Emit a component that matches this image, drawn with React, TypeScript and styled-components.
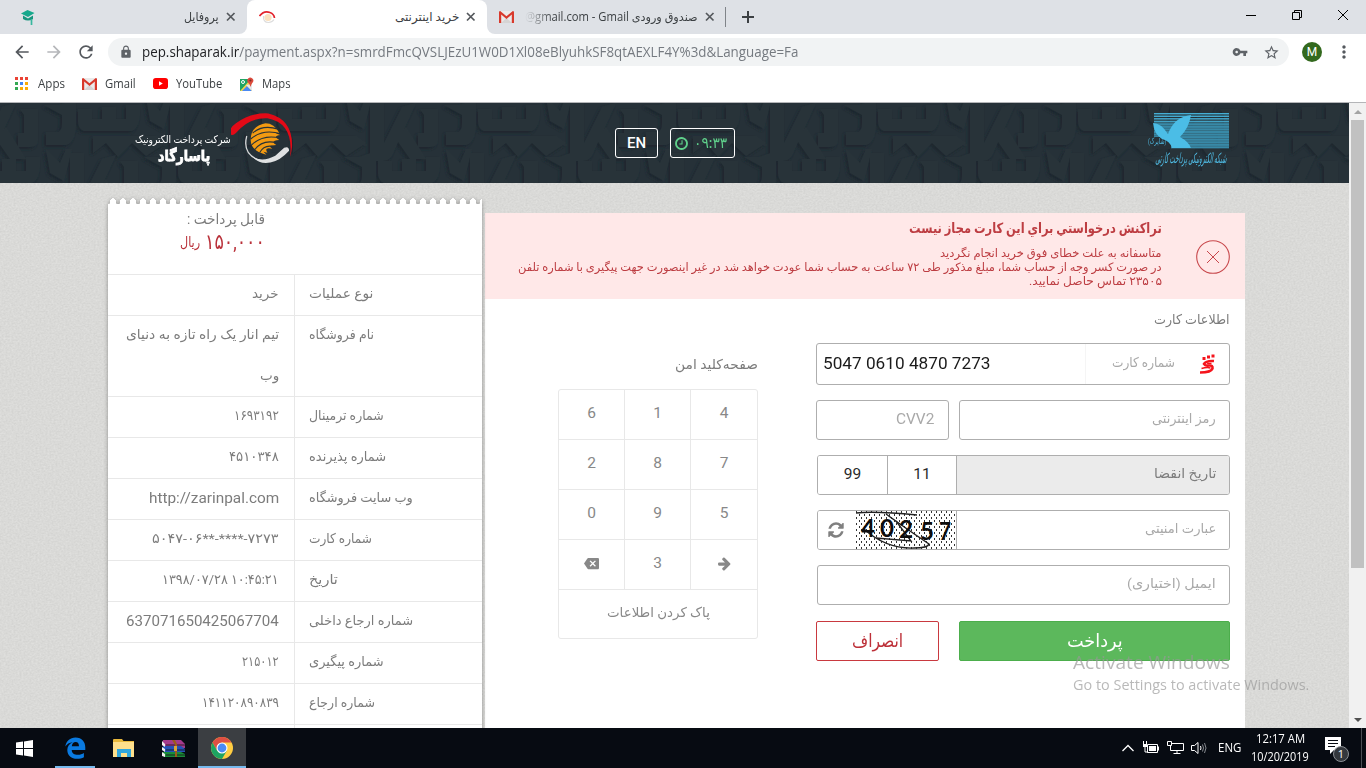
import React, { useLayoutEffect, useRef, useState } from 'react';
import styled, { createGlobalStyle, css } from 'styled-components';
import { MdArrowBack, MdArrowForward, MdRefresh, MdLock, MdVpnKey, MdStarBorder, MdMoreVert, MdBackspace } from 'react-icons/md';

const ui = `'Open Sans', 'Noto Sans', 'DejaVu Sans', sans-serif`;
const web = `Roboto, 'DejaVu Sans', sans-serif`;

const Global = createGlobalStyle`
  * { box-sizing: border-box; }
  body { margin: 0; background: #fff; overflow: hidden; }
`;

/* ---------- text fitted to a fixed measure ---------- */

const FitBox = styled.span<{ $w: number }>`
  display: inline-block;
  flex: none;
  width: ${p => p.$w}px;
  direction: ltr;
  text-align: left;
  line-height: 1.2;
`;
const FitInner = styled.span<{ $rtl: boolean; $force: boolean }>`
  display: inline-block;
  white-space: nowrap;
  transform-origin: 0 50%;
  direction: ${p => (p.$rtl ? 'rtl' : 'ltr')};
  ${p => p.$force && css`unicode-bidi: bidi-override;`}
`;

function Fit({ w, children, ltr = false, force = false }: { w: number; children: React.ReactNode; ltr?: boolean; force?: boolean }) {
  const ref = useRef<HTMLSpanElement>(null);
  const [scale, setScale] = useState(1);
  useLayoutEffect(() => {
    if (ref.current) setScale(w / ref.current.offsetWidth);
  }, [w]);
  return (
    <FitBox $w={w}>
      <FitInner ref={ref} $rtl={!ltr} $force={force} style={{ transform: `scaleX(${scale})` }}>{children}</FitInner>
    </FitBox>
  );
}

/* ---------- browser chrome ---------- */

const Screen = styled.div`
  position: relative;
  width: 1366px;
  height: 768px;
  display: flex;
  flex-direction: column;
  overflow: hidden;
  font-family: ${ui};
`;
const TabStrip = styled.div`
  height: 34px;
  flex: none;
  display: flex;
  background: #fff;
`;
const Tab = styled.div<{ $w: number; $active?: boolean; $left: number; $right: number; $round?: string }>`
  width: ${p => p.$w}px;
  height: 34px;
  display: flex;
  align-items: center;
  padding: 0 ${p => p.$right}px 0 ${p => p.$left}px;
  background: ${p => (p.$active ? '#fff' : '#dee1e6')};
  border-radius: ${p => p.$round || '0'};
  font-size: 12px;
  color: #3c4043;
  svg { flex: none; }
`;
const ActiveBack = styled.div`
  background: #dee1e6;
  flex: none;
`;
const StripRest = styled.div`
  flex: 1;
  background: #dee1e6;
  display: flex;
  align-items: center;
  svg { flex: none; }
`;
const Spacer = styled.div`
  flex: 1;
`;
const CloseSvg = styled.svg`
  margin-left: 7px;
  margin-right: 2px;
`;
const CloseX = () => (
  <CloseSvg width="10" height="10" viewBox="0 0 10 10">
    <path d="M1 1l7.500 7.500M8.500 1L1 8.500" stroke="#54585c" strokeWidth="1.700" />
  </CloseSvg>
);
const Faded = styled.span`
  display: flex;
  mask-image: linear-gradient(90deg, transparent 0, #000 28px);
`;
const TabDivider = styled.div`
  width: 1px;
  height: 20px;
  background: #808489;
`;
const WindowButtons = styled.div`
  display: flex;
  gap: 36px;
  align-items: center;
  padding: 0 18px 5px 0;
`;
const Toolbar = styled.div`
  height: 36px;
  flex: none;
  display: flex;
  align-items: center;
  padding-left: 12px;
  background: #fff;
  color: #55595e;
`;
const NavIcons = styled.div`
  display: flex;
  gap: 12px;
  width: 96px;
  svg { width: 20px; height: 20px; }
  svg:nth-child(2) { color: #b5b7ba; }
`;
const Omnibox = styled.div`
  width: 1181px;
  height: 28px;
  border-radius: 14px;
  background: #f1f3f4;
  display: flex;
  align-items: center;
  padding: 0 9px 0 11px;
  font-size: 14px;
  > svg { width: 14px; height: 14px; color: #5f6368; }
  > svg + span { margin-left: 9px; }
`;
const Host = styled.span`
  color: #202124;
`;
const UrlText = styled.span`
  color: #757a80;
`;
const OmniIcons = styled.div`
  display: flex;
  align-items: center;
  gap: 15px;
  color: #5f6368;
`;
const Avatar = styled.div`
  width: 20px;
  height: 20px;
  margin: 0 12px 0 13px;
  border-radius: 50%;
  background: #33691e;
  color: #fff;
  font: 12px/20px Roboto, sans-serif;
  text-align: center;
`;
const Bookmarks = styled.div`
  height: 33px;
  flex: none;
  display: flex;
  align-items: center;
  padding: 0 0 4px 15px;
  border-bottom: 1px solid #b4b5b8;
  background: #fff;
  font-size: 12px;
  color: #3c4043;
`;
const Bookmark = styled.div<{ $gap: number; $after: number }>`
  display: flex;
  align-items: center;
  gap: ${p => p.$gap}px;
  margin-right: ${p => p.$after}px;
`;

const GmailIcon = () => (
  <svg width="15" height="12" viewBox="0 0 15 12">
    <rect x="1" width="13" height="12" fill="#eceaea" />
    <path d="M2 12 7.500 7 13 12z" fill="#d6d4d4" />
    <path d="M0 12V1.200Q0 0 1.200 0L7.500 5.300 13.800 0Q15 0 15 1.200V12H12.800V3.600L7.500 8 2.200 3.600V12z" fill="#d8392c" />
  </svg>
);
const CapIcon = () => (
  <svg width="16" height="17" viewBox="0 0 16 17">
    <path d="M1 4.500 7.500 1 14.500 4 8 8z" fill="#16a88c" />
    <path d="M3 6.500 8 9.500 13 6.500V10Q8 13 3 10z" fill="#17957d" />
    <path d="M11.500 10v6" stroke="#39b89f" strokeWidth="1.700" />
  </svg>
);
const EyeIcon = () => (
  <svg width="17" height="15" viewBox="0 0 17 15">
    <path d="M.5 6Q5 0 11 2.500 15 4 15.500 8" fill="none" stroke="#e3242c" strokeWidth="1.700" />
    <circle cx="9" cy="7.500" r="3.600" fill="#fae0bd" />
    <path d="M4.500 6Q4 12.500 9.500 12.500q3.500 0 5.500-3" fill="none" stroke="#dcdcdc" strokeWidth="1.200" />
  </svg>
);
const AppsIcon = () => (
  <svg width="13" height="13" viewBox="0 0 13 13">
    {['#ea4335', '#ea4335', '#ea4335', '#34a853', '#4285f4', '#fbab05', '#34a853', '#fbab05', '#fbab05'].map((c, i) => (
      <rect key={i} x={(i % 3) * 5} y={Math.floor(i / 3) * 5} width="3" height="3" fill={c} />
    ))}
  </svg>
);
const YouTubeIcon = () => (
  <svg width="15" height="11" viewBox="0 0 15 11">
    <rect width="15" height="11" rx="2.800" fill="#f00" />
    <path d="M6 3.200 9.800 5.500 6 7.800z" fill="#fff" />
  </svg>
);
const MapsIcon = () => (
  <svg width="15" height="15" viewBox="0 0 15 15">
    <path d="M1 2h12v12H1z" fill="#1fa463" />
    <path d="M1 14 11 3l2 2v9z" fill="#f6d34a" />
    <path d="M3 14l5-5 5 5z" fill="#4a89f3" />
    <path d="M7 8l6 6V7z" fill="#e4e7e9" />
    <circle cx="4" cy="5" r="1.500" fill="none" stroke="#fff" />
    <path d="M11.500 10Q11 7 9 5.500A3 3 0 1 1 14 5q-2 2-2.500 5z" fill="#dc4a3d" />
    <circle cx="11.400" cy="3.500" r="1.100" fill="#7d2a22" />
  </svg>
);

/* ---------- page ---------- */

const Viewport = styled.div`
  height: 625px;
  flex: none;
  display: flex;
`;
const Page = styled.div`
  position: relative;
  width: 1349px;
  height: 625px;
  overflow: hidden;
  display: flex;
  flex-direction: column;
  background: #dadad8;
  font-family: ${web};
  color: #7c7c7c;
  isolation: isolate;
`;
const Backdrop = styled.svg`
  position: absolute;
  inset: 0;
  z-index: -1;
`;
const Banner = styled.header`
  position: relative;
  height: 80px;
  flex: none;
  display: flex;
  align-items: flex-start;
  padding-left: 134px;
  background: #263138;
  isolation: isolate;
`;
const HeadTools = styled.div`
  display: flex;
  gap: 12px;
  margin: 25px 0 0 321px;
`;
const HeadButton = styled.div<{ $w: number; $c: string }>`
  width: ${p => p.$w}px;
  height: 30px;
  border: 1px solid #fff;
  border-radius: 3px;
  display: flex;
  align-items: center;
  justify-content: center;
  gap: 5px;
  padding-right: ${p => (p.$w > 50 ? 4 : 0)}px;
  color: ${p => p.$c};
  font-size: 15px;
  font-weight: 500;
`;
const Brand = styled.div`
  display: flex;
  padding-top: 6px;
  width: 160px;
  color: #fff;
`;
const BrandText = styled.div`
  width: 97px;
  flex: none;
  display: flex;
  flex-direction: column;
  align-items: center;
  padding-top: 25px;
  font-size: 10.500px;
`;
const BrandName = styled.div`
  font-size: 15px;
  font-weight: 700;
  margin: 0 0 0 3px;
  -webkit-text-stroke: 0.8px #fff;
`;
const Shaparak = styled.div`
  width: 86px;
  margin: 8px 0 0 411px;
  display: flex;
  flex-direction: column;
  color: #50bde6;
`;
const ShaparakArt = styled.div`
  position: relative;
  height: 39px;
`;
const ShaparakTag = styled.div`
  position: absolute;
  left: 2px;
  top: 26px;
  font-size: 8px;
`;
const ShaparakName = styled.div`
  padding-left: 10px;
  font-size: 14px;
  transform: skewX(-10deg);
`;
const Columns = styled.div`
  display: flex;
  align-items: flex-start;
  padding-left: 108px;
`;
const Receipt = styled.aside`
  width: 374px;
  margin: 15px 3px 0 0;
  filter: drop-shadow(0 1px 2px rgba(0, 0, 0, 0.35));
`;
const Scallops = styled.div`
  height: 6px;
  background: radial-gradient(ellipse 3.600px 6px at 5px 6px, #fff 92%, transparent) 0 0 / 10px 6px;
`;
const ReceiptBody = styled.div`
  height: 530px;
  background: #fff;
  overflow: hidden;
`;
const Payable = styled.div`
  height: 70px;
  padding: 7px 217px 0 0;
  display: flex;
  flex-direction: column;
  align-items: flex-end;
  font-size: 14px;
`;
const Amount = styled.div`
  display: flex;
  align-items: center;
  gap: 5px;
  margin-top: 2px;
  color: #b9313a;
  font-size: 21px;
`;
const Currency = styled.span`
  font-size: 14px;
`;
const Row = styled.div<{ $lines?: number }>`
  height: ${p => (p.$lines === 2 ? 81 : 41)}px;
  display: flex;
  border-top: 1px solid #e8e8e8;
  font-size: 13.500px;
`;
const Value = styled.div`
  width: 187px;
  padding-right: 15px;
  border-right: 1px solid #e8e8e8;
`;
const Line = styled.div`
  height: 40px;
  display: flex;
  align-items: center;
  justify-content: flex-end;
  padding-bottom: 3px;
  & + & { height: 42px; }
`;
const Label = styled.div`
  height: 40px;
  padding: 0 0 3px 14px;
  display: flex;
  align-items: center;
`;
const Latin = styled.span`
  font-size: 15px;
`;
const Checkout = styled.main`
  width: 760px;
  height: 515px;
  margin-top: 30px;
  background: #fff;
`;
const Alert = styled.div`
  height: 86px;
  display: flex;
  justify-content: flex-end;
  padding: 7px 15px 0 0;
  background: #ffe8e8;
  color: #bd3d42;
  font-size: 11.500px;
`;
const AlertText = styled.div`
  display: flex;
  flex-direction: column;
  align-items: flex-end;
  margin-right: 34px;
`;
const AlertLine = styled.div`
  height: 14px;
  display: flex;
  align-items: center;
`;
const AlertTitle = styled.div`
  height: 17px;
  margin-bottom: 10px;
  font-size: 14px;
  font-weight: 700;
  display: flex;
  align-items: center;
`;
const AlertIcon = styled.svg`
  margin-top: 20px;
`;
const Panels = styled.div`
  display: flex;
  padding-left: 73px;
`;
const KeySide = styled.section`
  width: 200px;
  margin: 56px 58px 0 0;
`;
const SectionTitle = styled.div`
  display: flex;
  justify-content: flex-end;
  align-items: center;
  height: 20px;
  padding-bottom: 1px;
  font-size: 13.500px;
`;
const Keypad = styled.div`
  margin-top: 14px;
  width: 200px;
  height: 250px;
  display: grid;
  grid-template-columns: 66px 66px 66px;
  grid-template-rows: repeat(4, 49px) 48px;
  gap: 1px 0;
  background: #e8e8e8;
  border: 1px solid #e8e8e8;
  border-radius: 3px;
  overflow: hidden;
`;
const Key = styled.div<{ $wide?: boolean }>`
  background: #fff;
  border-right: 1px solid #e8e8e8;
  display: flex;
  align-items: center;
  justify-content: center;
  padding-bottom: 3px;
  font-size: 15.500px;
  color: #888;
  &:nth-child(3n) { border-right: 0; }
  ${p => p.$wide && css`grid-column: 1 / -1; border-right: 0; font-size: 13.500px;`}
`;
const Form = styled.section`
  width: 414px;
  padding-top: 11px;
`;
const Fields = styled.div`
  display: flex;
  flex-direction: column;
  gap: 15px;
  margin-top: 13px;
`;
const Pair = styled.div`
  display: flex;
  justify-content: space-between;
`;
const Field = styled.div<{ $w?: number; $h?: number }>`
  width: ${p => p.$w || 414}px;
  height: ${p => p.$h || 40}px;
  align-self: flex-end;
  border: 1px solid #aeaeae;
  border-radius: 3px;
  background: #fff;
  display: flex;
  align-items: center;
  justify-content: flex-end;
  padding: 0 13px 3px 6px;
  font-size: 13.500px;
  color: #a9a9a9;
`;
const CardField = styled(Field)`
  padding: 0;
`;
const CardNumber = styled.div`
  width: 269px;
  height: 100%;
  padding: 0 0 2px 6px;
  display: flex;
  align-items: center;
  border-right: 1px solid #f5f5f5;
  font-size: 17px;
  color: #1a1a1a;
`;
const CardHint = styled.div`
  flex: 1;
  display: flex;
  align-items: center;
  justify-content: flex-end;
  gap: 24px;
  padding: 0 12px 4px 0;
  svg { position: relative; top: 2px; }
`;
const Joined = styled(Field)`
  padding: 0;
  overflow: hidden;
`;
const Cell = styled.div<{ $w: number; $gray?: boolean; $first?: boolean }>`
  width: ${p => p.$w}px;
  height: 38px;
  flex: none;
  display: flex;
  align-items: center;
  justify-content: ${p => (p.$gray ? 'flex-end' : 'center')};
  padding: 0 ${p => (p.$gray ? 13 : 0)}px 3px 0;
  border-left: ${p => (p.$first ? '0' : '1px solid #aeaeae')};
  background: ${p => (p.$gray ? '#ebebeb' : '#fff')};
  color: ${p => (p.$gray ? '#7d7d7d' : '#2a2a2a')};
  font-size: ${p => (p.$gray ? 13.5 : 15.5)}px;
`;
const Cvv = styled.span`
  font-size: 15px;
  margin-right: 1px;
`;
const Hint = styled.span`
  margin-right: 13px;
  font-size: 13.500px;
  color: #a9a9a9;
`;
const Reload = styled.span`
  display: flex;
  margin: 2px 0 0 -3px;
  color: #808080;
`;
const Submit = styled.div<{ $w: number; $solid?: boolean }>`
  width: ${p => p.$w}px;
  height: 40px;
  margin-top: 1px;
  display: flex;
  align-items: center;
  justify-content: center;
  border: 1px solid ${p => (p.$solid ? '#4cae4c' : '#c9393f')};
  border-radius: 2px;
  background: ${p => (p.$solid ? '#5cb85c' : '#fff')};
  color: ${p => (p.$solid ? '#fff' : '#bd3038')};
  font-size: 18px;
`;
const Scrollbar = styled.div`
  width: 17px;
  height: 625px;
  background: #f1f1f1;
  display: flex;
  flex-direction: column;
  align-items: center;
  padding: 6px 0 5px;
`;
const Thumb = styled.div`
  width: 13px;
  height: 448px;
  margin: 6px 0 auto;
  background: #c1c1c1;
`;

const Watermark = styled.div`
  position: absolute;
  left: 1073px;
  top: 649px;
  display: flex;
  flex-direction: column;
  color: rgba(152, 152, 152, 0.68);
`;
const MarkTitle = styled.div`
  font-size: 19px;
  height: 26px;
`;
const MarkText = styled.div`
  font-size: 14px;
`;

/* One run of the square kufi ornament, repeated in a half-drop. */
const ornament = (
  <>
    <path d="M64 2H80L96 -4V22Q95 40 86 42H66V29H78Q82 28 82 20V12z" />
    <path d="M98 6H112V16H122V4H136V16H146V2H160Q161 24 152 28H104Q98 26 98 18z" />
    <path d="M113 33H176L186 40L166 53 152 40 138 54 126 40 113 50z" />
    <path d="M190 -2H204V40L222 4 236 0 214 48Q211 58 202 58H190z" />
    <path d="M216 36 226 24 246 56H230z" />
    <path d="M166 -6 180 8 186 -6 192 -6 184 26 170 18z" />
    <path d="M240 6H258V36Q258 44 250 44H238V30H244V12z" />
  </>
);
const ornamentField = (
  <>
    {ornament}
    <g transform="translate(-200 0)">{ornament}</g>
    <g transform="translate(-100 52)">{ornament}</g>
    <g transform="translate(100 52)">{ornament}</g>
    <g transform="translate(-300 52)">{ornament}</g>
  </>
);

const BannerArt = () => (
  <Backdrop width="1349" height="80">
    <defs>
      <filter id="soft" x="-5%" y="-5%" width="110%" height="110%"><feGaussianBlur stdDeviation="1.500" /></filter>
      <pattern id="kufi" width="200" height="80" patternUnits="userSpaceOnUse" x="180">
        <g fill="#1b272d" transform="translate(-2 2)" filter="url(#soft)">{ornamentField}</g>
        <g fill="#283339">{ornamentField}</g>
      </pattern>
    </defs>
    <rect width="1349" height="80" fill="url(#kufi)" />
  </Backdrop>
);

const Linen = () => (
  <Backdrop width="1349" height="625">
    <filter id="linen" x="0" y="0" width="100%" height="100%" colorInterpolationFilters="sRGB">
      <feTurbulence type="fractalNoise" baseFrequency="0.5 0.6" numOctaves="2" seed="4" />
      <feColorMatrix values="0.080 0 0 0 0.813  0.080 0 0 0 0.813  0.080 0 0 0 0.805  0 0 0 0 1" />
    </filter>
    <rect width="1349" height="625" filter="url(#linen)" />
  </Backdrop>
);

const Emblem = () => (
  <svg width="64" height="57" viewBox="0 0 64 57">
    <path d="M-1 24Q-2 19 5 14 20 3 38 4 63 10 62 38 61 46 60 48 64 14 37 9 18 8 5 24 1 28 -1 24z" fill="#e20a17" />
    <path d="M16 27Q11 46 30 52" fill="none" stroke="#d8dadb" strokeWidth="1.300" />
    <path d="M22 48Q32 54 45 47L54 39Q59 37 59 42 50 52 40 54 28 56 22 48z" fill="#dfe1e2" />
    <path d="M49 24Q44 14 35 14 20 17 20 31 20 42 36 46L33 43 37 44Q33 38 42 40 36 36 46 36 39 32 49 31 42 27 50 26 42 23 49 24z" fill="#f39a12" />
    <path d="M22 24Q32 15 48 20M20 30Q33 19 51 25M21 36Q32 25 50 29M24 41Q32 30 47 34M29 44Q34 35 44 38" fill="none" stroke="#263138" strokeWidth="1.100" />
  </svg>
);

const ShaparakLogo = () => (
  <svg width="86" height="39" viewBox="0 0 86 39">
    {Array.from({ length: 14 }, (_, i) => (
      <rect key={i} x="8" y={2 + i * 2.57} width="75" height={i < 4 ? 1.4 : 2} fill={i < 4 ? '#45aed3' : '#347f9c'} />
    ))}
    <rect x="8" y="10" width="75" height="27" fill="#3d96b6" opacity="0.450" />
    <path d="M6 26H19L25 33V38H6z" fill="#263138" />
    <path d="M7 12Q15 12 22 23 28 6 45 4 43 17 34 26 43 31 45 37H26Q24 30 16 28 8 23 7 12z" fill="#4bbde6" />
  </svg>
);

const FaIcon = ({ d, size }: { d: string; size: number }) => (
  <svg width={size} height={size} viewBox="0 0 1792 1792" fill="currentColor"><path d={d} /></svg>
);
const clockPath = 'M1024 544v448q0 14-9 23t-23 9h-320q-14 0-23-9t-9-23v-64q0-14 9-23t23-9h224v-352q0-14 9-23t23-9h64q14 0 23 9t9 23zm416 352q0-148-73-273t-198-198-273-73-273 73-198 198-73 273 73 273 198 198 273 73 273-73 198-198 73-273zm224 0q0 209-103 385.500t-279.500 279.500-385.500 103-385.500-103-279.500-279.500-103-385.500 103-385.500 279.500-279.500 385.500-103 385.500 103 279.500 279.500 103 385.500z';
const refreshPath = 'M1639 1056q0 5-1 7-64 268-268 434.500t-478 166.500q-146 0-282.500-55t-243.500-157l-129 129q-19 19-45 19t-45-19-19-45v-448q0-26 19-45t45-19h448q26 0 45 19t19 45-19 45l-137 137q71 66 161 102t187 36q134 0 250-65t186-179q11-17 53-117 8-23 30-23h192q13 0 22.500 9.500t9.500 22.500zm25-800v448q0 26-19 45t-45 19h-448q-26 0-45-19t-19-45 19-45l138-138q-148-137-349-137-134 0-250 65t-186 179q-11 17-53 117-8 23-30 23h-199q-13 0-22.500-9.500t-9.500-22.500v-7q65-268 270-434.500t480-166.500q146 0 284 55.500t245 156.500l130-129q19-19 45-19t45 19 19 45z';
const arrowPath = 'M1600 960q0 54-37 91l-651 651q-39 37-91 37-51 0-90-37l-75-75q-38-38-38-91t38-91l293-293h-704q-52 0-84.500-37.500t-32.500-90.500v-128q0-53 32.500-90.500t84.500-37.500h704l-293-294q-38-36-38-90t38-90l75-75q38-38 90-38 53 0 91 38l651 651q37 35 37 90z';

const ShetabIcon = () => (
  <svg width="18" height="22" viewBox="0 0 18 22" fill="none" stroke="#f5141c">
    <path d="M1 19.500Q12 19.500 13.500 15.500 14 12 10 12.500 6 13 5 11 7 7.500 15 8" strokeWidth="2.600" />
    <path d="M2.500 15.500Q8 14 11.500 15M8.500 9.500Q8 11 12.500 10.500" strokeWidth="1.500" />
    <path d="M3.500 5.500h3M8 4h3M12.500 3h3" strokeWidth="2.800" />
  </svg>
);

const Captcha = () => (
  <svg width="100" height="38" viewBox="0 0 100 38">
    <defs>
      <pattern id="dots" width="5" height="6" patternUnits="userSpaceOnUse">
        <path d="M0 0h1v2H0zM3 3h1v2H3z" fill="#333" />
      </pattern>
    </defs>
    <rect width="100" height="38" fill="#fff" />
    <rect width="100" height="38" fill="url(#dots)" />
    <g fill="none" stroke="#222">
      <path d="M0 2Q20 0 61 4M30 3Q45 14 73 33 72 37 58 37" strokeWidth="1.500" />
      <path d="M8 18 Q30 38 58 37M20 27 55 30 40 10" strokeWidth="1.300" />
    </g>
    <g fontFamily="Lato, sans-serif" fontWeight="700" fontSize="25" fill="#0d0d0d">
      <text x="5" y="26" textLength="14" lengthAdjust="spacingAndGlyphs">4</text>
      <text x="24" y="26" textLength="14" lengthAdjust="spacingAndGlyphs">0</text>
      <text x="43" y="27" textLength="14" lengthAdjust="spacingAndGlyphs">2</text>
      <text x="64" y="29" textLength="14" lengthAdjust="spacingAndGlyphs">5</text>
      <text x="83" y="29" textLength="12" lengthAdjust="spacingAndGlyphs">7</text>
    </g>
  </svg>
);

/* ---------- taskbar ---------- */

const Taskbar = styled.footer`
  height: 40px;
  flex: none;
  display: flex;
  background: #070b12;
  color: #fff;
`;
const TaskItem = styled.div<{ $w: number; $active?: boolean; $line?: number; $nudge?: number }>`
  width: ${p => p.$w}px;
  height: 40px;
  padding-right: ${p => p.$nudge || 0}px;
  display: flex;
  align-items: center;
  justify-content: center;
  background-color: ${p => (p.$active ? '#3b3e42' : 'transparent')};
  ${p => p.$line && css`
    background-image: linear-gradient(#76b9ed, #76b9ed);
    background-size: ${p.$line}px 2px;
    background-position: 50% 100%;
    background-repeat: no-repeat;
  `}
`;
const Tray = styled.div`
  margin-left: auto;
  display: flex;
  align-items: center;
  font-size: 12px;
`;
const TrayIcons = styled.div`
  display: flex;
  align-items: center;
  gap: 7px;
  svg + span { margin-left: 3px; }
`;
const Clock = styled.div`
  display: flex;
  flex-direction: column;
  align-items: center;
  gap: 4px;
  width: 60px;
  margin: 0 14px 0 9px;
`;
const TrayEdge = styled.div`
  width: 1px;
  height: 40px;
  margin: 0 4px 0 9px;
  background: #4a4e54;
`;

const details: { label: string; lw: number; value: string[]; vw: number[]; kind?: 'latin' | 'forced' }[] = [
  { label: 'نوع عملیات', lw: 64, value: ['خرید'], vw: [27] },
  { label: 'نام فروشگاه', lw: 65, value: ['تیم انار یک راه تازه به دنیای', 'وب'], vw: [153, 19] },
  { label: 'شماره ترمینال', lw: 75, value: ['۱۶۹۳۱۹۲'], vw: [45] },
  { label: 'شماره پذیرنده', lw: 77, value: ['۴۵۱۰۳۴۸'], vw: [50] },
  { label: 'وب سایت فروشگاه', lw: 104, value: ['http://zarinpal.com'], vw: [130], kind: 'latin' },
  { label: 'شماره کارت', lw: 63, value: ['۵۰۴۷-۰۶**-****-۷۲۷۳'], vw: [127], kind: 'forced' },
  { label: 'تاریخ', lw: 29, value: ['۱۳۹۸/۰۷/۲۸ ۱۰:۴۵:۲۱'], vw: [117], kind: 'forced' },
  { label: 'شماره ارجاع داخلی', lw: 104, value: ['637071650425067704'], vw: [153], kind: 'latin' },
  { label: 'شماره پیگیری', lw: 75, value: ['۲۱۵۰۱۲'], vw: [37] },
  { label: 'شماره ارجاع', lw: 66, value: ['۱۴۱۱۲۰۸۹۰۸۳۹'], vw: [77] },
];

export default function App() {
  return (
    <Screen>
      <Global />
      <TabStrip>
        <Tab $w={247} $left={20} $right={9} $round="0 0 8px 0">
          <CapIcon />
          <Spacer />
          <Fit w={35}>پروفایل</Fit>
          <CloseX />
        </Tab>
        <ActiveBack>
          <Tab $w={240} $left={12} $right={9} $active $round="8px 8px 0 0">
            <EyeIcon />
            <Spacer />
            <Fit w={64}>خرید اینترنتی</Fit>
            <CloseX />
          </Tab>
        </ActiveBack>
        <Tab $w={238} $left={12} $right={8} $round="0 0 0 8px">
          <GmailIcon />
          <Spacer />
          <Faded><Fit w={173}>صندوق ورودی <bdi>@gmail.com - Gmail</bdi></Fit></Faded>
          <CloseX />
        </Tab>
        <StripRest>
          <TabDivider />
          <svg width="44" height="14" viewBox="0 0 44 14"><path d="M16 7h12M22 1v12" stroke="#3c4043" strokeWidth="2" /></svg>
          <Spacer />
          <WindowButtons>
            <svg width="10" height="10"><path d="M0 5.500h10" stroke="#000" /></svg>
            <svg width="10" height="10" fill="none" stroke="#000"><path d="M.5 2.500h7v7h-7zM2.500 2.500v-2h7v7h-2" /></svg>
            <svg width="10" height="10"><path d="M0 0l10 10M10 0L0 10" stroke="#000" /></svg>
          </WindowButtons>
        </StripRest>
      </TabStrip>
      <Toolbar>
        <NavIcons><MdArrowBack /><MdArrowForward /><MdRefresh /></NavIcons>
        <Omnibox>
          <MdLock />
          <Fit w={656} ltr><Host>pep.shaparak.ir</Host><UrlText>/payment.aspx?n=smrdFmcQVSLJEzU1W0D1Xl08eBlyuhkSF8qtAEXLF4Y%3d&amp;Language=Fa</UrlText></Fit>
          <Spacer />
          <OmniIcons><MdVpnKey size={16} /><MdStarBorder size={17} /></OmniIcons>
        </Omnibox>
        <Avatar>M</Avatar>
        <MdMoreVert size={20} />
      </Toolbar>
      <Bookmarks>
        <Bookmark $gap={10} $after={17}><AppsIcon /><Fit w={27} ltr>Apps</Fit></Bookmark>
        <Bookmark $gap={8} $after={17}><GmailIcon /><Fit w={31} ltr>Gmail</Fit></Bookmark>
        <Bookmark $gap={8} $after={17}><YouTubeIcon /><Fit w={46} ltr>YouTube</Fit></Bookmark>
        <Bookmark $gap={8} $after={0}><MapsIcon /><Fit w={29} ltr>Maps</Fit></Bookmark>
      </Bookmarks>

      <Viewport>
        <Page>
          <Linen />
          <Banner>
            <BannerArt />
            <Brand>
              <BrandText>
                <Fit w={96}>شرکت پرداخت الکترونیک</Fit>
                <BrandName><Fit w={52}>پاسارگاد</Fit></BrandName>
              </BrandText>
              <Emblem />
            </Brand>
            <HeadTools>
              <HeadButton $w={43} $c="#fff"><Fit w={19} ltr>EN</Fit></HeadButton>
              <HeadButton $w={65} $c="#5fd08b"><FaIcon d={clockPath} size={15} /><Fit w={33} ltr force>۰۹:۳۳</Fit></HeadButton>
            </HeadTools>
            <Shaparak>
              <ShaparakArt>
                <ShaparakLogo />
                <ShaparakTag><Fit w={18}>(شاپرک)</Fit></ShaparakTag>
              </ShaparakArt>
              <ShaparakName><Fit w={71}>شبکه الکترونیکی پرداخت کارتی</Fit></ShaparakName>
            </Shaparak>
          </Banner>
          <Columns>
            <Receipt>
              <Scallops />
              <ReceiptBody>
                <Payable>
                  <Fit w={78}>قابل پرداخت :</Fit>
                  <Amount><Currency><Fit w={20}>ریال</Fit></Currency><Fit w={60} ltr force>۱۵۰,۰۰۰</Fit></Amount>
                </Payable>
                {details.map(d => (
                  <Row key={d.label} $lines={d.value.length}>
                    <Value>
                      {d.value.map((v, i) => (
                        <Line key={v}>
                          {d.kind === 'latin'
                            ? <Latin><Fit w={d.vw[i]} ltr>{v}</Fit></Latin>
                            : <Fit w={d.vw[i]} ltr={d.kind === 'forced'} force={d.kind === 'forced'}>{v}</Fit>}
                        </Line>
                      ))}
                    </Value>
                    <Label><Fit w={d.lw}>{d.label}</Fit></Label>
                  </Row>
                ))}
                <Row><Value /></Row>
              </ReceiptBody>
            </Receipt>
            <Checkout>
              <Alert>
                <AlertText>
                  <AlertTitle><Fit w={253}>تراكنش درخواستي براي اين كارت مجاز نيست</Fit></AlertTitle>
                  <AlertLine><Fit w={222}>متاسفانه به علت خطای فوق خرید انجام نگردید</Fit></AlertLine>
                  <AlertLine><Fit w={644}>در صورت کسر وجه از حساب شما، مبلغ مذکور طی ۷۲ ساعت به حساب شما عودت خواهد شد در غیر اینصورت جهت پیگیری با شماره تلفن</Fit></AlertLine>
                  <AlertLine><Fit w={133}>۲۳۵۰۵ تماس حاصل نمایید.</Fit></AlertLine>
                </AlertText>
                <AlertIcon width="34" height="34" viewBox="0 0 34 34" fill="none" stroke="#c8484c">
                  <circle cx="17" cy="17" r="16.300" strokeWidth="1.100" />
                  <path d="M11 11l12 12M23 11L11 23" strokeWidth="1" />
                </AlertIcon>
              </Alert>
              <Panels>
                <KeySide>
                  <SectionTitle><Fit w={83}>صفحه‌کلید امن</Fit></SectionTitle>
                  <Keypad>
                    {['6', '1', '4', '2', '8', '7', '0', '9', '5'].map(n => <Key key={n}>{n}</Key>)}
                    <Key><MdBackspace size={15} /></Key>
                    <Key>3</Key>
                    <Key><FaIcon d={arrowPath} size={15} /></Key>
                    <Key $wide><Fit w={103}>پاک کردن اطلاعات</Fit></Key>
                  </Keypad>
                </KeySide>
                <Form>
                  <SectionTitle><Fit w={76}>اطلاعات کارت</Fit></SectionTitle>
                  <Fields>
                    <CardField $h={42}>
                      <CardNumber><Fit w={168} ltr>5047 0610 4870 7273</Fit></CardNumber>
                      <CardHint><Fit w={63}>شماره کارت</Fit><ShetabIcon /></CardHint>
                    </CardField>
                    <Pair>
                      <Field $w={133}><Cvv><Fit w={38} ltr>CVV2</Fit></Cvv></Field>
                      <Field $w={271}><Fit w={64}>رمز اینترنتی</Fit></Field>
                    </Pair>
                    <Joined $w={413}>
                      <Cell $w={69} $first>99</Cell>
                      <Cell $w={69}>11</Cell>
                      <Cell $w={273} $gray><Fit w={62}>تاریخ انقضا</Fit></Cell>
                    </Joined>
                    <Joined $w={413}>
                      <Cell $w={38} $first><Reload><FaIcon d={refreshPath} size={18} /></Reload></Cell>
                      <Captcha />
                      <Cell $w={273}><Spacer /><Hint><Fit w={71}>عبارت امنیتی</Fit></Hint></Cell>
                    </Joined>
                    <Field $w={413}><Fit w={89}>ایمیل (اختیاری)</Fit></Field>
                    <Pair>
                      <Submit $w={123}><Fit w={51}>انصراف</Fit></Submit>
                      <Submit $w={271} $solid><Fit w={56}>پرداخت</Fit></Submit>
                    </Pair>
                  </Fields>
                </Form>
              </Panels>
            </Checkout>
          </Columns>
        </Page>
        <Scrollbar>
          <svg width="8" height="5"><path d="M0 5L4 1l4 4z" fill="#a3a3a3" /></svg>
          <Thumb />
          <svg width="8" height="5"><path d="M0 0h8L4 4z" fill="#505050" /></svg>
        </Scrollbar>
      </Viewport>

      <Taskbar>
        <TaskItem $w={50} $nudge={2}>
          <svg width="17" height="17" viewBox="0 0 17 17" fill="#fff"><path d="M0 2.500 7 1.500V8H0zM8 1.400 17 0v8H8zM0 9h7v6.500l-7-1zM8 9h9v8l-9-1.400z" /></svg>
        </TaskItem>
        <TaskItem $w={50} $line={40}>
          <svg width="21" height="22" viewBox="0 0 21 22">
            <path d="M.3 9.600C1.200 4 5 .5 10.500.5 17 .5 20.300 5 20.300 10.500V13H6.700C6.900 16.300 9.400 17.800 12.800 17.800 15.400 17.800 17.300 17 18.900 16V20.300C17 21.300 14.700 21.800 12 21.800 6.500 21.800 2.300 18.500 2.300 13 2.300 9.500 4.400 6.600 7.800 5.200 4.300 5.400 1.900 7 .3 9.600zM6.800 9.200H14C14 6.500 12.800 5 10.600 5 8.600 5 7.100 6.600 6.800 9.200z" fill="#0a7ae0" />
          </svg>
        </TaskItem>
        <TaskItem $w={48}>
          <svg width="22" height="19" viewBox="0 0 22 19">
            <path d="M0 1Q0 0 1 0h8l1.500 2H21v16H0z" fill="#e9b93c" />
            <path d="M0 3h21v15H0z" fill="#ffe08c" />
            <path d="M4 18v-8h14v8h-4v-4H8v4z" fill="#32a7dd" />
          </svg>
        </TaskItem>
        <TaskItem $w={50}>
          <svg width="24" height="19" viewBox="0 0 24 19">
            <path d="M2 1h18l4 4v4H4L1 6z" fill="#a43a8c" />
            <path d="M2 7h18l4 3v3H4L1 11z" fill="#2552b8" />
            <path d="M2 13h18l4 2v3H4L1 16z" fill="#1a8b3a" />
            <path d="M1 2l3 3v3L1 6zM1 8l3 2v3L1 11zM1 13l3 2v3l-3-1z" fill="#f0f0f0" />
            <path d="M5 6h19M5 11h19M5 16h19" stroke="#111" strokeWidth=".8" />
            <path d="M11 1h3l2 4v13h-2V6z" fill="#9b5a1c" />
            <path d="M13 7h3v5h-3z" fill="#d9a43c" />
          </svg>
        </TaskItem>
        <TaskItem $w={48} $active $line={48}>
          <svg width="22" height="22" viewBox="0 0 22 22">
            <circle cx="11" cy="11" r="11" fill="#ffcd42" />
            <path d="M1.500 5.500A11 11 0 0 1 20.500 5.500H11L6.200 13.800z" fill="#de4f43" />
            <path d="M1.500 5.500A11 11 0 0 0 11 22L15.800 13.800H6.200z" fill="#1da462" />
            <circle cx="11" cy="11" r="5.500" fill="#fff" />
            <circle cx="11" cy="11" r="4.400" fill="#4a8af4" />
          </svg>
        </TaskItem>
        <Tray>
          <TrayIcons>
            <svg width="14" height="10" fill="none" stroke="#fff" strokeWidth="1.300"><path d="M1.500 8L7 2.500 12.500 8" /></svg>
            <svg width="18" height="14" fill="none" stroke="#fff"><path d="M5.500 3.500h10v8h-10zM16.500 5.500v4" /><path d="M7 5h7v5H7zM1 3h4v3H1z" fill="#fff" stroke="none" /><path d="M1.500 0v3M4.500 0v3M3 6v5h3" /></svg>
            <svg width="17" height="14" fill="none" stroke="#fff"><path d="M5 2.500h11.500v7H3.500V5M10 9.500v3M6.500 12.500h7M.5.500h4v4h-4z" /></svg>
            <svg width="17" height="14" fill="none" stroke="#fff"><path d="M.5 4.500h3L7 1.500v11L3.500 9.500h-3zM9.500 5q1 2 0 4" /><path d="M11.500 3.500q2 3.500 0 7M13.500 2q3 5 0 10" stroke="#868a8f" /></svg>
            <Fit w={23} ltr>ENG</Fit>
          </TrayIcons>
          <Clock><Fit w={49} ltr>12:17 AM</Fit><Fit w={58} ltr>10/20/2019</Fit></Clock>
          <svg width="28" height="28" viewBox="0 0 28 28">
            <path d="M1 3h16v13h-7l-4 4v-4H1z" fill="#fff" />
            <path d="M4 6.500h10M4 9.500h10M4 12.500h7" stroke="#070b12" />
            <circle cx="17" cy="20" r="7.500" fill="#34383d" stroke="#8c9095" />
            <text x="17" y="24" textAnchor="middle" fontSize="11" fontFamily="Open Sans, sans-serif" fill="#fff">1</text>
          </svg>
          <TrayEdge />
        </Tray>
      </Taskbar>

      <Watermark>
        <MarkTitle><Fit w={157} ltr>Activate Windows</Fit></MarkTitle>
        <MarkText><Fit w={236} ltr>Go to Settings to activate Windows.</Fit></MarkText>
      </Watermark>
    </Screen>
  );
}
